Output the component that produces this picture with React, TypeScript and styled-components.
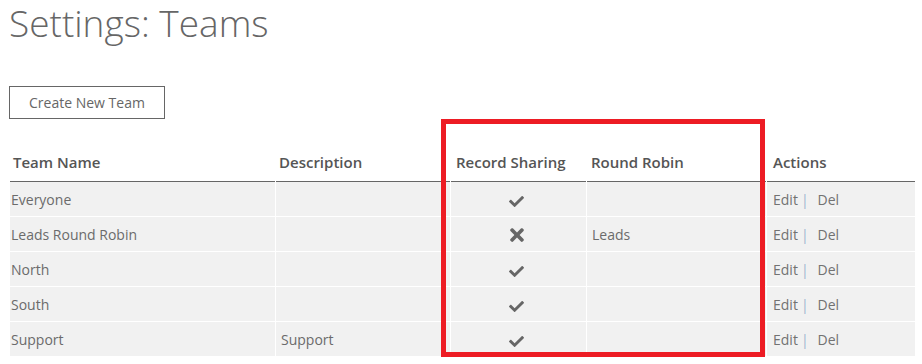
import React from "react";
import styled, { createGlobalStyle } from "styled-components";
import { FaCheck, FaTimes } from "react-icons/fa";

type TTeam = {
  name: string;
  description: string;
  sharing: boolean;
  robin: string;
};

const teams: TTeam[] = [
  { name: "Everyone", description: "", sharing: true, robin: "" },
  { name: "Leads Round Robin", description: "", sharing: false, robin: "Leads" },
  { name: "North", description: "", sharing: true, robin: "" },
  { name: "South", description: "", sharing: true, robin: "" },
  { name: "Support", description: "Support", sharing: true, robin: "" },
];

const columns = [
  { title: "Team Name", width: 265, pad: 3 },
  { title: "Description", width: 174, pad: 3 },
  { title: "Record Sharing", width: 135, pad: 5 },
  { title: "Round Robin", width: 179, pad: 4 },
  { title: "Actions", width: 148, pad: 6 },
];

export default function App() {
  return (
    <Page>
      <GlobalStyle />
      <Title>Settings: Teams</Title>
      <CreateButton type="button">Create New Team</CreateButton>
      <TableWrap>
        <Table>
          <colgroup>
            {columns.map((c) => (
              <Col key={c.title} $width={c.width} />
            ))}
          </colgroup>
          <thead>
            <tr>
              {columns.map((c) => (
                <Head key={c.title} $pad={c.pad}>
                  {c.title}
                </Head>
              ))}
            </tr>
          </thead>
          <tbody>
            {teams.map((t) => (
              <tr key={t.name}>
                <Cell $pad={1}>{t.name}</Cell>
                <Cell $pad={5}>{t.description}</Cell>
                <Cell $pad={0} $center>
                  <Mark>{t.sharing ? <FaCheck size={15} /> : <FaTimes size={20} />}</Mark>
                </Cell>
                <Cell $pad={5}>{t.robin}</Cell>
                <Cell $pad={6}>
                  <Action>Edit</Action>
                  <Divider>|</Divider>
                  <Action>Del</Action>
                </Cell>
              </tr>
            ))}
          </tbody>
        </Table>
        <Highlight />
      </TableWrap>
    </Page>
  );
}

const GlobalStyle = createGlobalStyle`
  html, body {
    margin: 0;
    background: #fff;
  }
  body {
    font-family: "Open Sans", "Liberation Sans", sans-serif;
    color: #666;
  }
`;

const Page = styled.div`
  display: flex;
  flex-direction: column;
  align-items: flex-start;
  padding: 0 6px 0 9px;
`;

const Title = styled.h1`
  margin: 0;
  font-size: 37px;
  line-height: 46px;
  font-weight: 300;
  color: #666;
`;

const CreateButton = styled.button`
  margin-top: 40px;
  height: 33px;
  padding: 0 19px;
  border: 1px solid #666;
  background: #fff;
  color: #666;
  font-family: inherit;
  font-size: 14px;
  font-weight: 400;
  line-height: 31px;
`;

const TableWrap = styled.div`
  position: relative;
  margin-top: 18px;
`;

const Table = styled.table`
  table-layout: fixed;
  width: 907px;
  border-collapse: separate;
  border-spacing: 1px 0;
`;

const Col = styled.col<{ $width: number }>`
  width: ${(p) => p.$width}px;
`;

const Head = styled.th<{ $pad: number }>`
  padding: 16px 2px 9px ${(p) => p.$pad}px;
  border-bottom: 1px solid #666;
  text-align: left;
  font-size: 15px;
  line-height: 19px;
  font-weight: 600;
  color: #555;
  white-space: nowrap;
`;

const Cell = styled.td<{ $pad: number; $center?: boolean }>`
  height: 32px;
  padding: 2px 4px 0 ${(p) => p.$pad}px;
  border-bottom: 1px solid #fff;
  background: #f1f1f1;
  text-align: ${(p) => (p.$center ? "center" : "left")};
  vertical-align: middle;
  font-size: 14px;
  line-height: 18px;
  color: #6b6b6b;
  white-space: nowrap;
`;

const Mark = styled.span`
  display: inline-flex;
  vertical-align: middle;
  color: #666;
`;

const Action = styled.span`
  color: #727272;
`;

const Divider = styled.span`
  margin: 0 9px 0 3px;
  color: #9db6cf;
`;

const Highlight = styled.div`
  position: absolute;
  left: 432px;
  top: -18px;
  width: 324px;
  height: 238px;
  box-sizing: border-box;
  border: 5px solid #ed1c24;
  pointer-events: none;
`;
